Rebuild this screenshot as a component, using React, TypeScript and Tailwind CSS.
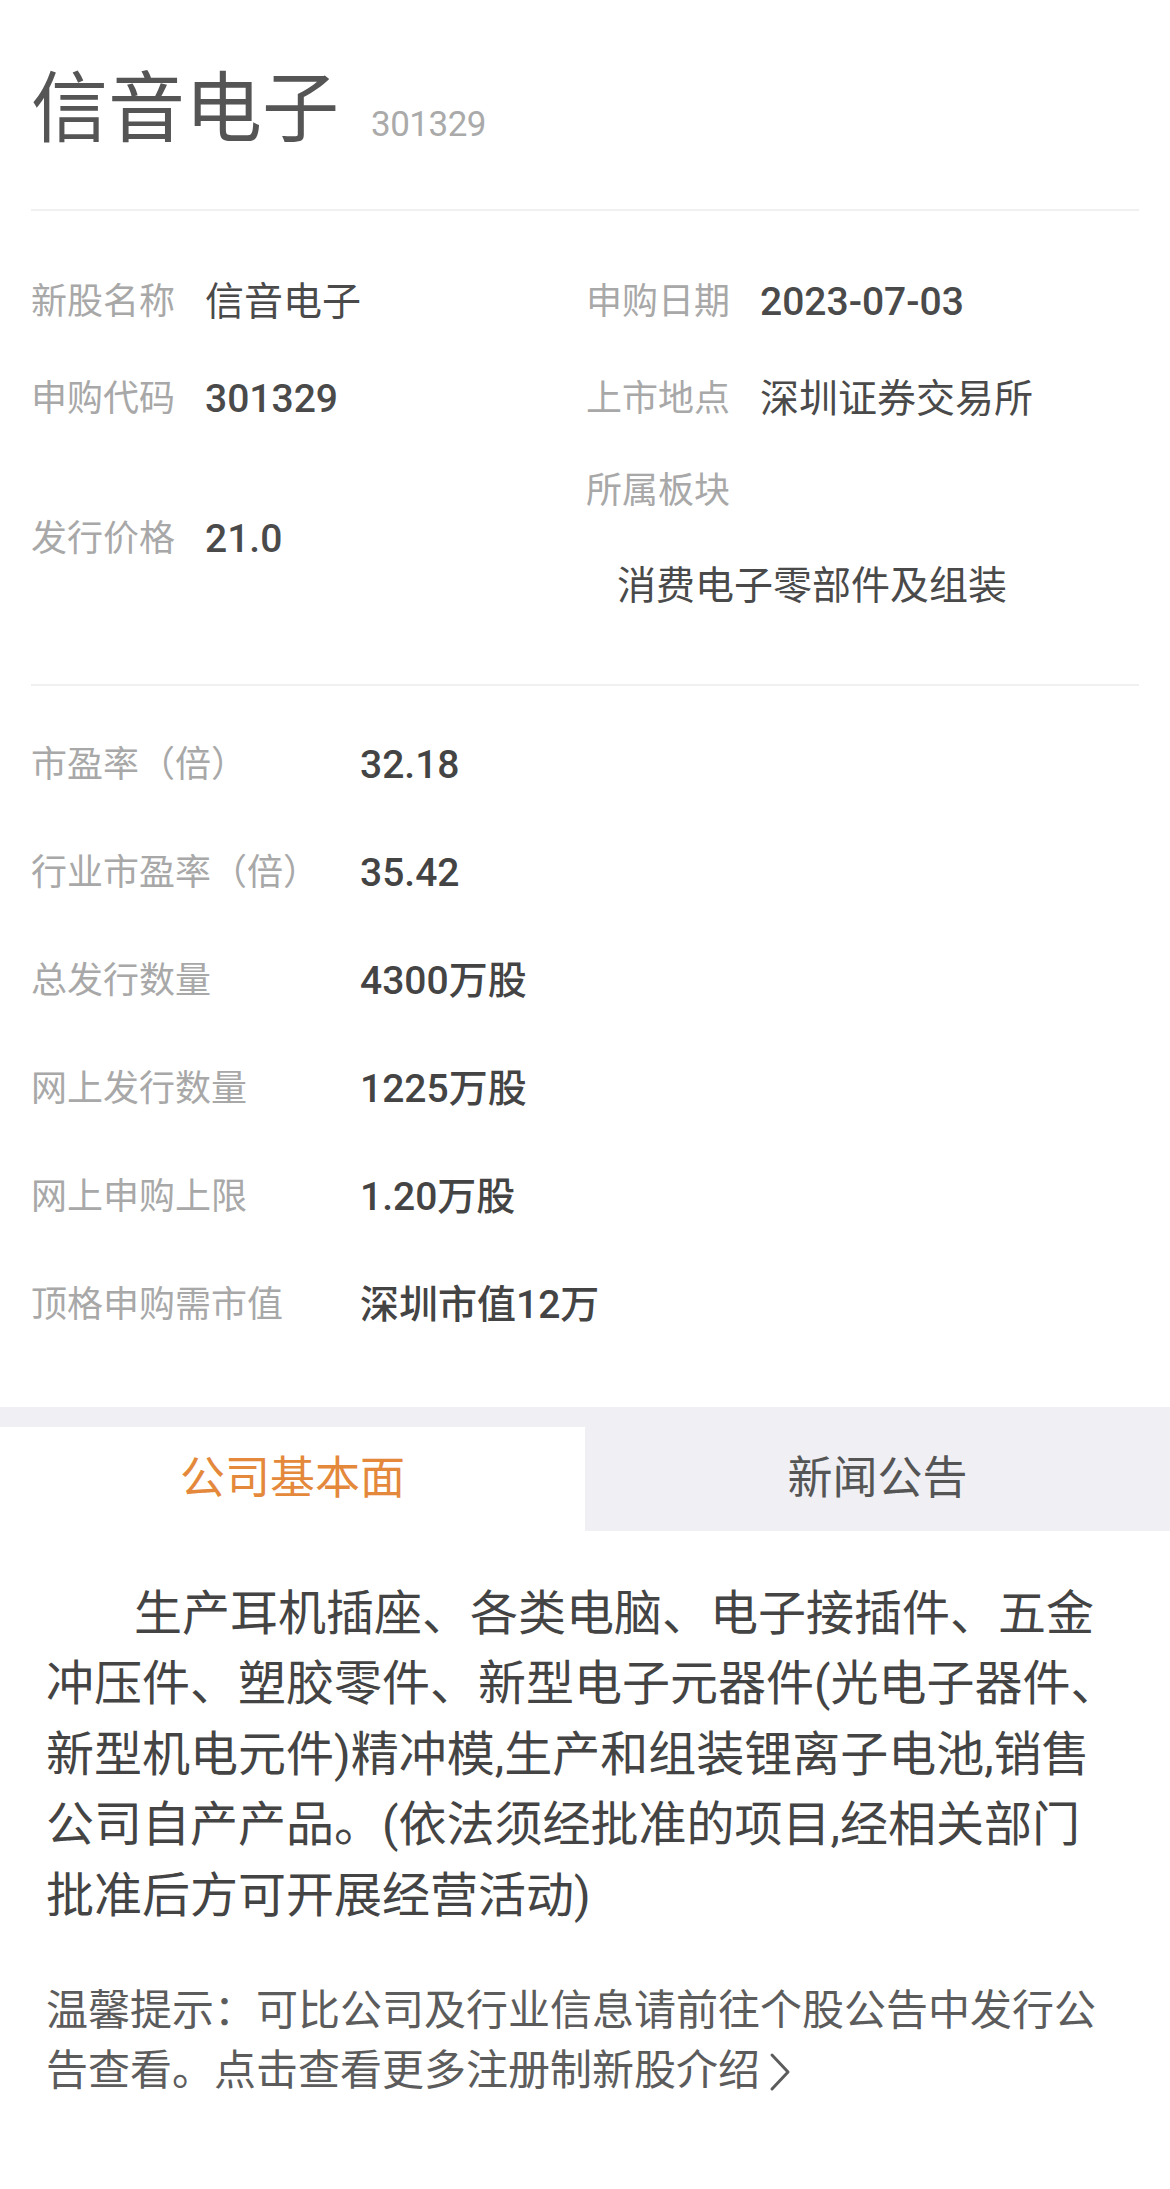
import React from "react";

const FONT = { fontFamily: '"Roboto", "Noto Sans CJK SC", sans-serif' };

function Chevron() {
  return (
    <svg width="24" height="44" viewBox="0 0 24 44" className="inline-block ml-[8px] align-[-9px]">
      <path d="M4 5 L20 22 L4 39" fill="none" stroke="#5c5c5c" strokeWidth="3" strokeLinecap="round" strokeLinejoin="round" />
    </svg>
  );
}

function Cell({ label, value, num }: { label: string; value: string; num?: boolean }) {
  return (
    <div className="flex items-center">
      <span className="text-[36px] leading-[50px] text-[#a8a8a8] w-[144px] shrink-0">{label}</span>
      <span className={num ? "ml-[30px] text-[39px] leading-[50px] text-[#4a4a4a] font-medium" : "ml-[30px] text-[39px] leading-[50px] text-[#4a4a4a]"}>
        {value}
      </span>
    </div>
  );
}

const stats: [string, string][] = [
  ["市盈率（倍）", "32.18"],
  ["行业市盈率（倍）", "35.42"],
  ["总发行数量", "4300万股"],
  ["网上发行数量", "1225万股"],
  ["网上申购上限", "1.20万股"],
  ["顶格申购需市值", "深圳市值12万"],
];

export default function App() {
  return (
    <div className="w-[1170px] min-h-[2189px] bg-white" style={FONT}>
      <div className="px-[31px]">
        <div className="flex items-baseline pt-[72px] pb-[57px]">
          <h1 className="text-[77px] leading-[76px] text-[#555555] font-normal">信音电子</h1>
          <span className="ml-[32px] text-[35px] text-[#aaaaaa] tracking-[-0.5px]">301329</span>
        </div>
        <div className="h-[2px] bg-[#f0f0f0]" />

        <div className="pt-[43px] grid grid-cols-[555px_1fr]">
          <div className="h-[97px] flex items-center">
            <Cell label="新股名称" value="信音电子" />
          </div>
          <div className="h-[97px] flex items-center">
            <Cell label="申购日期" value="2023-07-03" num />
          </div>
          <div className="h-[97px] flex items-center">
            <Cell label="申购代码" value="301329" num />
          </div>
          <div className="h-[97px] flex items-center">
            <Cell label="上市地点" value="深圳证券交易所" />
          </div>
          <div className="h-[183px] flex items-center">
            <Cell label="发行价格" value="21.0" num />
          </div>
          <div className="h-[183px] flex flex-col pt-[18px]">
            <span className="text-[36px] leading-[50px] text-[#a8a8a8]">所属板块</span>
            <span className="mt-[45px] pl-[31px] text-[39px] leading-[50px] text-[#4a4a4a]">消费电子零部件及组装</span>
          </div>
        </div>

        <div className="mt-[53px] h-[2px] bg-[#f0f0f0]" />

        <div className="pt-[25px] pb-[48px] flex flex-col">
          {stats.map(([l, v]) => (
            <div key={l} className="h-[108px] flex items-center">
              <span className="w-[329px] shrink-0 text-[36px] leading-[50px] text-[#a8a8a8]">{l}</span>
              <span className="text-[39px] leading-[50px] text-[#444444] font-medium">{v}</span>
            </div>
          ))}
        </div>
      </div>

      <div className="h-[20px] bg-[#efeff4]" />
      <div className="flex h-[104px]">
        <div className="flex-1 bg-white flex items-center justify-center text-[45px] text-[#e4883b]">
          公司基本面
        </div>
        <div className="flex-1 bg-[#efeff4] flex items-center justify-center text-[45px] text-[#555555]">
          新闻公告
        </div>
      </div>

      <div className="pl-[46px] pr-[30px] pt-[48px]">
        <p className="text-[48px] leading-[70.5px] text-[#444444] indent-[88px]">
          生产耳机插座、各类电脑、电子接插件、五金
          <br />
          冲压件、塑胶零件、新型电子元器件(光电子器件、
          <br />
          新型机电元件)精冲模,生产和组装锂离子电池,销售
          <br />
          公司自产产品。(依法须经批准的项目,经相关部门
          <br />
          批准后方可开展经营活动)
        </p>
        <p className="mt-[50px] text-[42px] leading-[60px] text-[#5c5c5c]">
          温馨提示：可比公司及行业信息请前往个股公告中发行公
          <br />
          告查看。点击查看更多注册制新股介绍
          <Chevron />
        </p>
      </div>
    </div>
  );
}
